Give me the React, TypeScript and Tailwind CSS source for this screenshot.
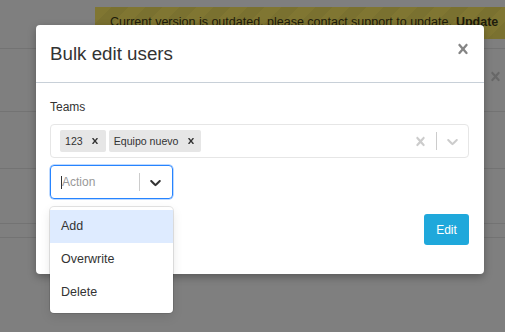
const CROSS =
  "M14.348 14.849c-0.469 0.469-1.229 0.469-1.697 0l-2.651-3.030-2.651 3.029c-0.469 0.469-1.229 0.469-1.697 0-0.469-0.469-0.469-1.229 0-1.697l2.758-3.15-2.759-3.152c-0.469-0.469-0.469-1.228 0-1.697s1.228-0.469 1.697 0l2.652 3.031 2.651-3.031c0.469-0.469 1.228-0.469 1.697 0s0.469 1.229 0 1.697l-2.758 3.152 2.758 3.15c0.469 0.469 0.469 1.229 0 1.698z";
const CHEVRON =
  "M4.516 7.548c0.436-0.446 1.043-0.481 1.576 0l3.908 3.747 3.908-3.747c0.533-0.481 1.141-0.446 1.574 0 0.436 0.445 0.408 1.197 0 1.615-0.406 0.418-4.695 4.502-4.695 4.502-0.217 0.223-0.502 0.335-0.787 0.335s-0.57-0.112-0.789-0.335c0 0-4.287-4.084-4.695-4.502s-0.436-1.17 0-1.615z";

function Cross({ size, className }: { size: number; className?: string }) {
  return (
    <svg width={size} height={size} viewBox="5 5 10 10" className={className} style={{ overflow: "visible" }} fill="currentColor">
      <path d={CROSS} />
    </svg>
  );
}

function Chevron({ size, className }: { size: number; className?: string }) {
  return (
    <svg width={size} height={size} viewBox="4 4 12 12" className={className} fill="currentColor">
      <path d={CHEVRON} />
    </svg>
  );
}

function Tag({ label }: { label: string }) {
  return (
    <div className="flex h-[22px] items-center rounded-[2px] bg-[#e6e6e6] text-[10.6px] text-[#333]">
      <span className="pl-[5px] pr-[2px] leading-[14px]">{label}</span>
      <span className="flex w-[21px] items-center justify-center text-[#333]">
        <Cross size={6} />
      </span>
    </div>
  );
}

export default function App() {
  return (
    <div className="relative h-[332px] w-[505px] overflow-hidden bg-[#7f7f7f] font-['Liberation_Sans',Arial,sans-serif]">
      {/* background page */}
      <div className="flex flex-col">
        <div className="h-[49px] border-b border-[#737373] pt-[7px] pl-[95px]">
          <div className="h-[32px] whitespace-nowrap bg-[repeating-linear-gradient(135deg,#807632_0px,#807632_12px,#7a7130_12px,#7a7130_24px)] pl-[15px] pt-[5px] text-[12.5px] leading-[20px] text-[#1e1c0c]">
            Current version is outdated, please contact support to update.
            <strong className="ml-[4px] font-bold">Update</strong>
          </div>
        </div>
        <div className="flex h-[63px] justify-end border-b border-[#737373] pt-[23px] pr-[5px] text-[#686868]">
          <Cross size={9} />
        </div>
        <div className="h-[57px] border-b border-[#737373]" />
        <div className="h-[55px] border-b border-[#737373]" />
        <div className="h-[14px] border-b border-[#737373]" />
      </div>

      {/* modal */}
      <div className="absolute left-[36px] top-[25px] flex h-[249px] w-[448px] flex-col rounded-[4px] bg-white shadow-[0_3px_9px_rgba(0,0,0,0.3)]">
        <div className="flex h-[58px] justify-between border-b border-[#c8d0d8] pl-[14px] pr-[16px]">
          <h4 className="self-center text-[18.75px] leading-[24px] text-[#333]">Bulk edit users</h4>
          <div className="mt-[19px] text-[#858585]">
            <Cross size={10} />
          </div>
        </div>

        <div className="flex flex-col pl-[14px] pr-[15px] pt-[15px]">
          <label className="text-[12px] leading-[18px] text-[#333]">Teams</label>
          <div className="mt-[8px] flex h-[34px] items-center rounded-[4px] border border-[#e6e6e6] pl-[9px]">
            <div className="flex flex-1 items-center gap-[3px]">
              <Tag label="123" />
              <Tag label="Equipo nuevo" />
            </div>
            <div className="flex items-center pr-[10px] text-[#cccccc]">
              <Cross size={9} className="mr-[11px]" />
              <span className="h-[18px] w-[1px] bg-[#cccccc]" />
              <Chevron size={11} className="ml-[10px]" />
            </div>
          </div>

          <div className="relative mt-[7px] w-[123px]">
            <div className="flex h-[34px] items-center rounded-[4px] border border-[#2684ff] shadow-[0_0_0_0.5px_rgba(38,132,255,0.6)]">
              <div className="flex flex-1 items-center pl-[10px]">
                <span className="h-[13px] w-[1px] bg-[#333]" />
                <span className="text-[12px] leading-[16px] text-[#999]">Action</span>
              </div>
              <span className="h-[18px] w-[1px] bg-[#cccccc]" />
              <Chevron size={11} className="ml-[10px] mr-[11px] text-[#333]" />
            </div>
            <div className="absolute left-0 top-[calc(100%+8px)] z-10 w-full rounded-[4px] bg-white pb-[4px] pt-[3px] shadow-[0_0_0_1px_rgba(0,0,0,0.1),0_4px_11px_rgba(0,0,0,0.1)]">
              <div className="flex h-[33px] items-center bg-[#deebff] px-[11px] text-[12.5px] text-[#333]">Add</div>
              <div className="flex h-[33px] items-center px-[11px] text-[12.5px] text-[#333]">Overwrite</div>
              <div className="flex h-[33px] items-center px-[11px] text-[12.5px] text-[#333]">Delete</div>
            </div>
          </div>

          <div className="mt-[15px] flex justify-end">
            <button className="h-[31px] w-[45px] rounded-[3px] bg-[#1fa8db] text-[12px] text-white">Edit</button>
          </div>
        </div>
      </div>
    </div>
  );
}
